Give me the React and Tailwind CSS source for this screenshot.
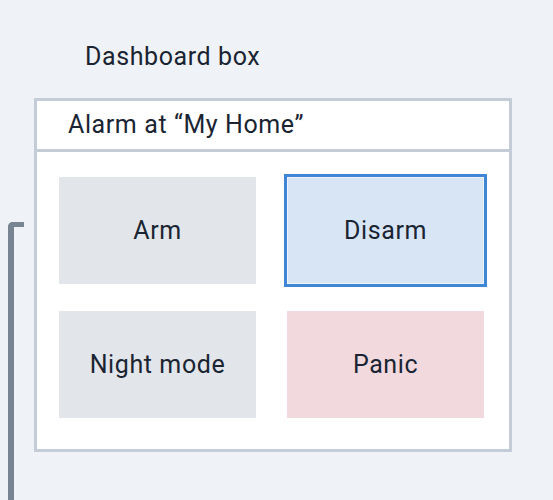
export default function App() {
  const font = { fontFamily: "Roboto, 'Noto Sans', sans-serif" };
  return (
    <div className="min-h-[500px] w-[553px] bg-[#eff3f7] flex text-[#1a2432] tracking-[0.6px] font-[450]" style={font}>
      <div className="ml-2 mt-[222px] w-4 h-[278px] border-l-[6px] border-t-[5px] border-[#778592] rounded-tl-[5px]" />
      <div className="ml-[10px] flex flex-col">
        <div className="ml-[51px] mt-[41px] h-[31px] text-[25px] leading-[31px]">Dashboard box</div>
        <div className="mt-[26px] w-[478px] h-[354px] bg-white border-[3px] border-[#c4cdd7] flex flex-col">
          <div className="h-[51px] border-b-[3px] border-[#c4cdd7] flex items-center pl-[31px] text-[25px]">
            Alarm at “My Home”
          </div>
          <div className="pt-[25px] pl-[22px] grid grid-cols-[197px_197px] gap-x-[31px] gap-y-[27px]">
            <div className="h-[107px] bg-[#e2e6eb] flex items-center justify-center text-[25px]">Arm</div>
            <div className="h-[107px] bg-[#d8e5f5] outline-[3px] outline-[#3f86d6] flex items-center justify-center text-[25px] shadow-[inset_0_0_0_1px_#eef4fb]">Disarm</div>
            <div className="h-[107px] bg-[#e2e6eb] flex items-center justify-center text-[25px]">Night mode</div>
            <div className="h-[107px] bg-[#f1d9dd] flex items-center justify-center text-[25px]">Panic</div>
          </div>
        </div>
      </div>
    </div>
  );
}
